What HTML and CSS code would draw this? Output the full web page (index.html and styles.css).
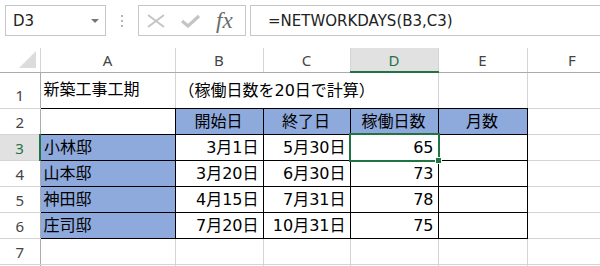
FILE: index.html
```html
<!DOCTYPE html>
<html lang="ja">
<head>
    <meta charset="UTF-8">
    <title>新築工事工期</title>
    <link rel="stylesheet" href="styles.css">
</head>
<body>
    <div class="toolbar">
        <div class="namebox">
            <span>D3</span>
            <span class="drop"></span>
        </div>
        <svg class="grip" width="3" height="12" viewBox="0 0 3 12">
            <rect x="0" y="0" width="2" height="2" fill="#b5b5b5"/>
            <rect x="0" y="5" width="2" height="2" fill="#b5b5b5"/>
            <rect x="0" y="10" width="2" height="2" fill="#b5b5b5"/>
        </svg>
        <div class="fxbox">
            <svg width="20" height="14" viewBox="0 0 20 14">
                <path d="M2 1 L18 13 M18 1 L2 13" stroke="#c4c4c4" stroke-width="2" fill="none"/>
            </svg>
            <svg width="21" height="14" viewBox="0 0 21 14">
                <path d="M2 7 L8 12 L19 2" stroke="#c4c4c4" stroke-width="3.2" fill="none"/>
            </svg>
            <span class="fx">fx</span>
        </div>
        <div class="formula">=NETWORKDAYS(B3,C3)</div>
    </div>

    <table class="sheet">
        <colgroup>
            <col style="width:40px">
            <col style="width:135px">
            <col style="width:88px">
            <col style="width:87px">
            <col style="width:88px">
            <col style="width:89px">
            <col style="width:90px">
        </colgroup>
        <tr class="head">
            <th class="corner"><span class="tri"></span></th>
            <th>A</th>
            <th>B</th>
            <th>C</th>
            <th class="sel">D</th>
            <th>E</th>
            <th>F</th>
        </tr>
        <tr class="r1">
            <th class="num">1</th>
            <td class="under">新築工事工期</td>
            <td class="under" colspan="3">（稼働日数を20日で計算）</td>
            <td class="under"></td>
            <td></td>
        </tr>
        <tr>
            <th class="num">2</th>
            <td class="box"></td>
            <td class="box blue mid">開始日</td>
            <td class="box blue mid">終了日</td>
            <td class="box blue mid">稼働日数</td>
            <td class="box blue mid">月数</td>
            <td></td>
        </tr>
        <tr>
            <th class="num sel">3</th>
            <td class="box blue">小林邸</td>
            <td class="box right">3月1日</td>
            <td class="box right">5月30日</td>
            <td class="box right active">65</td>
            <td class="box"></td>
            <td></td>
        </tr>
        <tr>
            <th class="num">4</th>
            <td class="box blue">山本邸</td>
            <td class="box right">3月20日</td>
            <td class="box right">6月30日</td>
            <td class="box right">73</td>
            <td class="box"></td>
            <td></td>
        </tr>
        <tr>
            <th class="num">5</th>
            <td class="box blue">神田邸</td>
            <td class="box right">4月15日</td>
            <td class="box right">7月31日</td>
            <td class="box right">78</td>
            <td class="box"></td>
            <td></td>
        </tr>
        <tr>
            <th class="num">6</th>
            <td class="box blue">庄司邸</td>
            <td class="box right">7月20日</td>
            <td class="box right">10月31日</td>
            <td class="box right">75</td>
            <td class="box"></td>
            <td></td>
        </tr>
        <tr>
            <th class="num">7</th>
            <td></td><td></td><td></td><td></td><td></td><td></td>
        </tr>
        <tr>
            <th class="num"></th>
            <td></td><td></td><td></td><td></td><td></td><td></td>
        </tr>
    </table>
</body>
</html>
```

FILE: styles.css
```css
body {
    margin: 0;
    width: 600px;
    height: 266px;
    overflow: hidden;
    background: #fff;
    font-family: "Noto Sans CJK JP", sans-serif;
    color: #000;
}
.toolbar {
    display: flex;
    align-items: center;
    padding: 5px 0 0 5px;
    height: 31px;
}
.namebox {
    box-sizing: border-box;
    width: 101px;
    height: 31px;
    border: 1px solid #c6c6c6;
    display: flex;
    align-items: center;
    justify-content: space-between;
    padding: 0 6px 0 7px;
    font-family: "DejaVu Sans", sans-serif;
    font-size: 15px;
    color: #222;
}
.drop {
    width: 0;
    height: 0;
    border-left: 4px solid transparent;
    border-right: 4px solid transparent;
    border-top: 4px solid #767676;
}
.grip {
    margin-left: 15px;
}
.fxbox {
    box-sizing: border-box;
    margin-left: 14px;
    width: 108px;
    height: 31px;
    border: 1px solid #c6c6c6;
    display: flex;
    align-items: center;
    padding: 0 8px 0 7px;
    gap: 14px;
}
.fx {
    margin-left: 1px;
    font-family: "Liberation Serif", serif;
    font-style: italic;
    font-size: 23px;
    color: #6a6a6a;
    line-height: 1;
}
.formula {
    box-sizing: border-box;
    flex: 1;
    margin-left: 4px;
    height: 31px;
    border: 1px solid #c6c6c6;
    border-right: none;
    padding: 0 0 0 17px;
    display: flex;
    align-items: center;
    font-family: "DejaVu Sans", sans-serif;
    font-size: 15px;
    color: #222;
}
.sheet {
    margin-top: 12px;
    border-collapse: collapse;
    table-layout: fixed;
    width: 617px;
}
.sheet td {
    height: 25px;
    padding: 0 4px 0 3px;
    border: 1px solid #d4d4d4;
    font-family: "DejaVu Sans", "Noto Sans CJK JP", sans-serif;
    font-size: 16px;
    line-height: 20px;
    white-space: nowrap;
    overflow: visible;
    vertical-align: middle;
}
.sheet .r1 td {
    height: 35px;
}
.head th {
    height: 23px;
    padding: 0;
    font-weight: normal;
    font-family: "Noto Sans", sans-serif;
    font-size: 15px;
    color: #444;
    border-right: 1px solid #d4d4d4;
    border-bottom: 1px solid #ababab;
    border-top: none;
}
.head th.sel {
    background: #e1e1e1;
    color: #217346;
    border-bottom: 2px solid #217346;
}
.corner {
    position: relative;
}
.tri {
    position: absolute;
    right: 4px;
    bottom: 4px;
    width: 0;
    height: 0;
    border-left: 17px solid transparent;
    border-bottom: 17px solid #dcdcdc;
}
th.num {
    padding: 0;
    font-weight: normal;
    font-family: "Noto Sans", sans-serif;
    font-size: 15px;
    color: #444;
    border-right: 1px solid #ababab;
    border-bottom: 1px solid #d4d4d4;
}
.r1 th.num {
    vertical-align: bottom;
    padding-bottom: 3px;
}
th.num.sel {
    background: #e1e1e1;
    color: #217346;
    border-right: 2px solid #217346;
}
.sheet td.under {
    border-bottom: 1px solid #000;
}
.sheet td.box {
    border: 1px solid #000;
}
.blue {
    background: #8ea9db;
}
.mid {
    text-align: center;
}
.right {
    text-align: right;
}
.active {
    position: relative;
}
.active::after {
    content: "";
    position: absolute;
    left: -2px;
    top: -2px;
    right: -2px;
    bottom: -2px;
    border: 2px solid #217346;
}
.active::before {
    content: "";
    position: absolute;
    right: -4px;
    bottom: -4px;
    width: 5px;
    height: 5px;
    background: #217346;
    border: 1px solid #fff;
    z-index: 1;
}
```
